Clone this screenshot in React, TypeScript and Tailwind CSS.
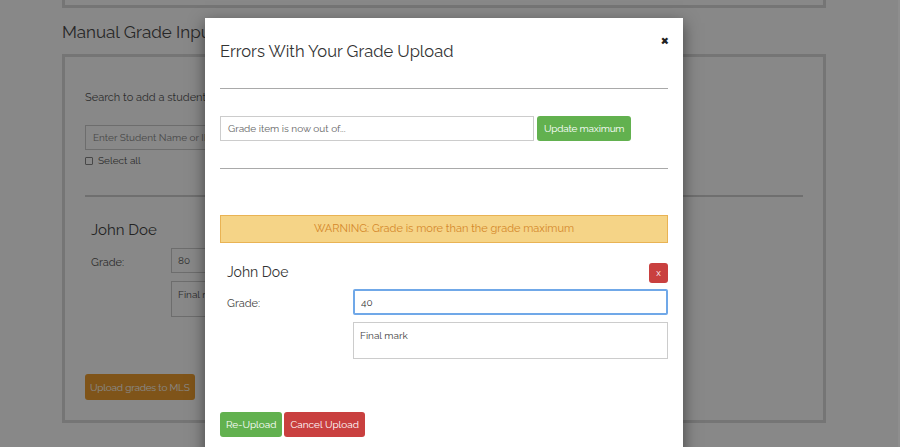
import { useState } from 'react';

const font = { fontFamily: 'Raleway, Lato, "Open Sans", sans-serif' };

function BackgroundPage() {
  return (
    <div className="w-[900px] h-[447px] bg-white overflow-hidden text-[#444]" style={font}>
      <div className="ml-[62px] w-[764px]">
        <div className="-mt-[40px] h-[48px] border-[3px] border-[#dcdcdc]" />
        <h2 className="mt-[12px] h-[24px] text-[17px] leading-[24px] text-[#4a4a4a]">Manual Grade Input</h2>
        <div className="mt-[10px] h-[369px] border-[3px] border-[#dcdcdc] px-[20px]">
          <p className="mt-[33px] text-[11px] leading-[16px] text-[#555]">Search to add a student:</p>
          <div className="mt-[19px] h-[25px] w-[330px] border border-[#ccc] px-[7px] text-[10px] leading-[23px] text-[#888]">
            Enter Student Name or ID...
          </div>
          <label className="mt-[3px] flex items-center gap-[5px] text-[10px] text-[#555]">
            <span className="h-[8px] w-[8px] border border-[#888] rounded-[1px] bg-white" />
            Select all
          </label>
          <div className="mt-[27px] h-[2px] bg-[#d0d0d0]" />
          <p className="mt-[23px] ml-[6px] text-[15px] leading-[20px] text-[#444]">John Doe</p>
          <div className="mt-[8px] flex">
            <span className="ml-[6px] w-[80px] pt-[7px] text-[11px] text-[#555]">Grade:</span>
            <div className="flex flex-col gap-[8px]">
              <div className="h-[25px] w-[400px] border border-[#ccc] px-[6px] text-[10px] leading-[23px] text-[#555]">80</div>
              <div className="h-[36px] w-[400px] border border-[#ccc] px-[6px] pt-[5px] text-[10px] text-[#555]">Final mark</div>
            </div>
          </div>
          <button className="mt-[57px] h-[26px] rounded-[3px] bg-[#ee9e2f] px-[5px] text-[10px] tracking-[-0.2px] text-white">
            Upload grades to MLS
          </button>
        </div>
      </div>
    </div>
  );
}

export default function App() {
  const [grade, setGrade] = useState('40');

  return (
    <div className="relative w-[900px] h-[447px] overflow-hidden" style={font}>
      <BackgroundPage />
      <div className="absolute inset-0 bg-black/[0.467]" />
      <div className="absolute right-0 top-0 h-full w-[2px] bg-[#8e8e8e]" />

      <div className="absolute left-[205px] top-[18px] w-[478px] h-[440px] bg-white shadow-[0_5px_15px_rgba(0,0,0,0.5)] px-[15px]">
        <div className="flex items-start justify-between">
          <h3 className="mt-[22px] text-[16.5px] leading-[22px] text-[#333]">Errors With Your Grade Upload</h3>
          <button className="mt-[13px] mr-[-1px] text-[18px] font-bold leading-[18px] text-[#222]">×</button>
        </div>
        <div className="mt-[26px] h-px bg-[#a9a9a9]" />

        <div className="mt-[27px] flex gap-[3px]">
          <div className="h-[25px] w-[314px] border border-[#ccc] px-[7px] text-[10px] leading-[23px] text-[#666]">
            Grade item is now out of...
          </div>
          <button className="h-[25px] rounded-[3px] bg-[#62b14f] px-[7px] text-[10px] tracking-[-0.2px] text-white">Update maximum</button>
        </div>
        <div className="mt-[27px] h-px bg-[#a9a9a9]" />

        <div className="mt-[46px] h-[28px] border border-[#e9b354] bg-[#f5d487] text-center text-[11px] leading-[26px] text-[#d4872a]">
          WARNING: Grade is more than the grade maximum
        </div>

        <div className="mt-[20px] flex items-start justify-between">
          <p className="ml-[7px] mt-[1px] text-[14px] leading-[16px] text-[#333]">John Doe</p>
          <button className="h-[20px] w-[19px] rounded-[3px] bg-[#c9403f] text-[9px] leading-[18px] text-white">x</button>
        </div>
        <div className="mt-[6px] flex">
          <span className="ml-[7px] w-[127px] pt-[7px] text-[11px] text-[#444]">Grade:</span>
          <div className="flex flex-col gap-[7px]">
            <input
              value={grade}
              onChange={(e) => setGrade(e.target.value)}
              className="h-[26px] w-[315px] rounded-[2px] border-2 border-[#70a8e8] px-[6px] text-[10px] text-[#333] outline-none"
            />
            <div className="h-[37px] w-[315px] border border-[#ccc] px-[6px] pt-[6px] text-[10px] leading-[14px] text-[#444]">
              Final mark
            </div>
          </div>
        </div>

        <div className="mt-[53px] flex gap-[2px]">
          <button className="h-[25px] rounded-[3px] bg-[#62b14f] px-[6px] text-[10px] text-white">Re-Upload</button>
          <button className="h-[25px] rounded-[3px] bg-[#c9403f] px-[6px] text-[10px] text-white">Cancel Upload</button>
        </div>
      </div>
    </div>
  );
}
